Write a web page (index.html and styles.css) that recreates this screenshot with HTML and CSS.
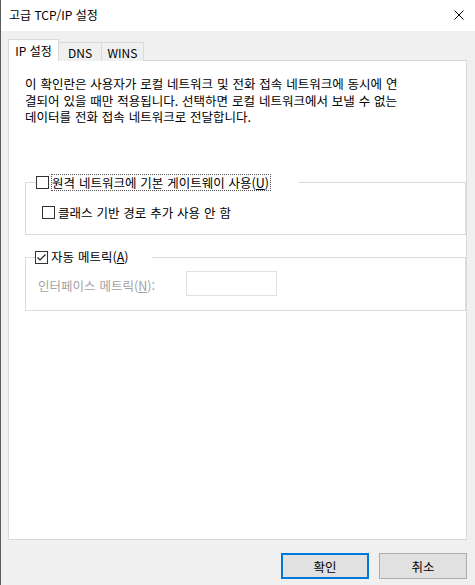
FILE: index.html
```html
<!DOCTYPE html>
<html lang="ko">
<head>
<meta charset="utf-8">
<title>고급 TCP/IP 설정</title>
<link rel="stylesheet" href="styles.css">
</head>
<body>
<div class="window">
  <div class="titlebar">
    <span class="title">고급 TCP/IP 설정</span>
    <svg class="close" width="10" height="10" viewBox="0 0 10 10"><path d="M0.5 0.5 L9.5 9.5 M9.5 0.5 L0.5 9.5" stroke="#000" stroke-width="1" fill="none"/></svg>
  </div>
  <div class="client">
    <div class="tabs">
      <div class="tab active">IP 설정</div>
      <div class="tab">DNS</div>
      <div class="tab">WINS</div>
    </div>
    <div class="panel">
      <p class="desc"><span class="line">이 확인란은 사용자가 로컬 네트워크 및 전화 접속 네트워크에 동시에 연</span><span class="line">결되어 있을 때만 적용됩니다. 선택하면 로컬 네트워크에서 보낼 수 없는</span><span class="line">데이터를 전화 접속 네트워크로 전달합니다.</span></p>
      <fieldset class="group group-gateway">
        <legend class="legend legend-gateway">
          <span class="check"><span class="box"></span><span class="focus">원격 네트워크에 기본 게이트웨이 사용(<u>U</u>)</span></span>
        </legend>
        <div class="check sub"><span class="box"></span><span class="label">클래스 기반 경로 추가 사용 안 함</span></div>
      </fieldset>
      <fieldset class="group group-metric">
        <legend class="legend legend-metric">
          <span class="check"><span class="box checked"><svg width="11" height="11" viewBox="0 0 11 11"><path d="M1.5 5.5 L4 8 L9.5 2.5" stroke="#222" stroke-width="1.2" fill="none"/></svg></span><span class="label">자동 메트릭(<u>A</u>)</span></span>
        </legend>
        <div class="metric">
          <span class="metric-label">인터페이스 메트릭(<u>N</u>):</span>
          <span class="input"></span>
        </div>
      </fieldset>
    </div>
    <div class="buttons">
      <button class="btn default">확인</button>
      <button class="btn">취소</button>
    </div>
  </div>
</div>
</body>
</html>
```
FILE: styles.css
```css
* { box-sizing: border-box; }
html, body {
  margin: 0;
  padding: 0;
  width: 475px;
  height: 585px;
  overflow: hidden;
  background: #f0f0f0;
}
body {
  font-family: "Noto Sans CJK KR", "Noto Sans", sans-serif;
  font-size: 12px;
  color: #000;
}
.window {
  width: 475px;
  height: 585px;
  border-left: 1px solid #5c5c5c;
  background: #f0f0f0;
  display: flex;
  flex-direction: column;
}
.titlebar {
  height: 31px;
  background: #fff;
  display: flex;
  align-items: center;
  justify-content: space-between;
  padding: 0 11px 2px 8px;
}
.title {
  font-size: 12px;
  line-height: 16px;
}
.close { display: block; }
.client {
  flex: 1;
  padding: 8px 8px 0 7px;
  display: flex;
  flex-direction: column;
}
.tabs {
  display: flex;
  align-items: flex-end;
  height: 22px;
  margin-bottom: -1px;
  position: relative;
  z-index: 1;
}
.tab {
  height: 19px;
  border: 1px solid #d9d9d9;
  border-bottom: none;
  background: #f0f0f0;
  line-height: 17px;
  padding-top: 1px;
  text-align: center;
  margin-left: -1px;
}
.tab.active {
  height: 22px;
  width: 51px;
  background: #fff;
  margin-left: 0;
  padding-top: 2px;
}
.tab:nth-child(2) { width: 43px; border-left: none; margin-left: 0; }
.tab:nth-child(3) { width: 43px; }
.panel {
  height: 480px;
  background: #fff;
  border: 1px solid #d9d9d9;
  padding: 15px 0 0 16px;
}
.desc {
  margin: 0;
  font-size: 12.5px;
  word-spacing: 0.4px;
  white-space: nowrap;
  color: #000;
  display: flex;
  flex-direction: column;
}
.line {
  display: block;
  height: 16.5px;
  line-height: 16.5px;
}
.group {
  margin: 0;
  border: 1px solid #dcdcdc;
  padding: 0;
  min-width: 0;
}
.group-gateway {
  margin-top: 48px;
  padding: 0 0 13px 16px;
}
.group-metric {
  margin-top: 14px;
  padding: 0 0 14px 12px;
}
.legend {
  padding: 0;
  height: 17px;
  display: flex;
  align-items: center;
}
.legend-gateway { margin-left: -6px; padding-right: 28px; }
.legend-metric { margin-left: -3px; padding-right: 24px; }
.check {
  display: flex;
  align-items: center;
  font-size: 12.5px;
  word-spacing: 0.4px;
  color: #000;
}
.box {
  width: 13px;
  height: 13px;
  border: 1px solid #333;
  background: #fff;
  flex: none;
  display: flex;
  align-items: center;
  justify-content: center;
}
.focus {
  margin-left: 2px;
  border: 1px dotted #555;
  padding: 0 1px 0 0;
  line-height: 15px;
}
.label { margin-left: 3px; line-height: 16px; }
.sub {
  margin-top: 14px;
  height: 16px;
}
.metric {
  margin-top: 5px;
  display: flex;
  align-items: flex-start;
}
.metric-label {
  width: 148px;
  color: #a3a3a3;
  font-size: 12.5px;
  line-height: 16px;
  padding-top: 7px;
  word-spacing: 0.4px;
}
.input {
  width: 91px;
  height: 25px;
  border: 1px solid #e0e0e0;
  background: #fff;
}
.buttons {
  display: flex;
  justify-content: flex-end;
  gap: 10px;
  margin-top: 13px;
}
.btn {
  width: 88px;
  height: 26px;
  font-family: inherit;
  font-size: 12.5px;
  color: #000;
  background: #e1e1e1;
  border: 1px solid #adadad;
  padding: 0;
  margin: 0;
}
.btn.default {
  border: 1px solid #0078d7;
  box-shadow: inset 0 0 0 1px #0078d7;
}
```
